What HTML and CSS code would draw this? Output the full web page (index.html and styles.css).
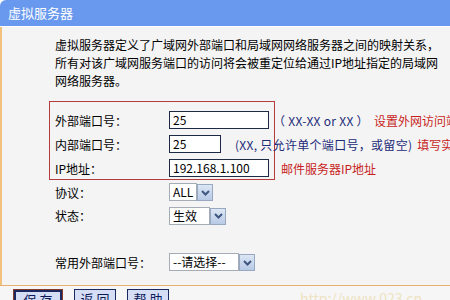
FILE: index.html
```html
<!DOCTYPE html>
<html lang="zh-CN">
<head>
  <meta charset="UTF-8" />
  <title>虚拟服务器</title>
  <link rel="stylesheet" href="styles.css">
</head>
<body>
  <div class="title">虚拟服务器</div>

  <div class="panel">
    <p class="intro">虚拟服务器定义了广域网外部端口和局域网网络服务器之间的映射关系，<br>所有对该广域网服务端口的访问将会被重定位给通过IP地址指定的局域网<br>网络服务器。</p>

    <div class="box">
      <div class="row">
        <span class="label">外部端口号：</span>
        <span class="input wide">25</span>
        <span class="hint first">（ XX-XX or XX ）</span><span class="note">设置外网访问端口</span>
      </div>
      <div class="row">
        <span class="label">内部端口号：</span>
        <span class="input short">25</span>
        <span class="hint second">(XX, 只允许单个端口号，或留空)</span><span class="note">填写实际端口</span>
      </div>
      <div class="row">
        <span class="label">IP地址：</span>
        <span class="input wide">192.168.1.100</span>
        <span class="note first">邮件服务器IP地址</span>
      </div>
    </div>

    <div class="row proto">
      <span class="label">协议：</span>
      <span class="select">
        <span class="val all">ALL</span>
        <span class="arrow"><svg width="9" height="6" viewBox="0 0 9 6"><path d="M1 1 L4.5 4.5 L8 1" fill="none" stroke="#3e5680" stroke-width="2"/></svg></span>
      </span>
    </div>
    <div class="row state">
      <span class="label">状态：</span>
      <span class="select">
        <span class="val on">生效</span>
        <span class="arrow"><svg width="9" height="6" viewBox="0 0 9 6"><path d="M1 1 L4.5 4.5 L8 1" fill="none" stroke="#3e5680" stroke-width="2"/></svg></span>
      </span>
    </div>
    <div class="row common">
      <span class="label">常用外部端口号：</span>
      <span class="select">
        <span class="val pick">--请选择--</span>
        <span class="arrow"><svg width="9" height="6" viewBox="0 0 9 6"><path d="M1 1 L4.5 4.5 L8 1" fill="none" stroke="#3e5680" stroke-width="2"/></svg></span>
      </span>
    </div>
  </div>

  <div class="footer">
    <span class="focus"><button class="btn">保 存</button></span>
    <button class="btn">返 回</button>
    <button class="btn">帮 助</button>
    <span class="mark">http://www.023.cn</span>
  </div>
</body>
</html>
```

FILE: styles.css
```css
body {
  margin: 0;
  font-family: "Noto Sans CJK SC", "DejaVu Sans", sans-serif;
  font-size: 12px;
  color: #000;
  background-color: #fff;
  width: 450px;
  height: 300px;
  overflow: hidden;
}
.title {
  height: 26px;
  line-height: 26px;
  padding-left: 8px;
  background-color: #6899ee;
  color: #fff;
  font-size: 13px;
  border-top-left-radius: 6px;
  border-bottom: 1px solid #fff;
}
.panel {
  background-color: #f4f4f4;
  border-left: 2px solid #f2c27c;
  padding: 9px 0 13px 53px;
  height: 236px;
}
.intro {
  margin: 0;
  line-height: 18px;
  white-space: nowrap;
}
.box {
  margin: 11px 0 0 -6px;
  width: 219px;
  padding: 9px 0 2px 5px;
  border: 1px solid #b43c3c;
}
.row {
  display: flex;
  align-items: center;
  height: 18px;
  white-space: nowrap;
}
.box .row + .row {
  margin-top: 6px;
}
.label {
  width: 114px;
  flex: none;
}
.input {
  box-sizing: border-box;
  height: 18px;
  line-height: 16px;
  padding-left: 3px;
  background-color: #fff;
  border: 1px solid #1d2a44;
  flex: none;
}
.input.wide {
  width: 100px;
}
.input.short {
  width: 52px;
}
.hint {
  color: #1c2a78;
  letter-spacing: 0.3px;
}
.hint.first {
  margin-left: 4px;
}
.hint.second {
  margin-left: 14px;
}
.note {
  color: #c81e1e;
  margin-left: 5px;
}
.note.first {
  margin-left: 12px;
}
.select {
  display: flex;
  height: 18px;
  box-sizing: border-box;
}
.val {
  box-sizing: border-box;
  height: 18px;
  line-height: 16px;
  padding-left: 3px;
  background-color: #fff;
  border: 1px solid #a5acb5;
}
.val.all {
  width: 28px;
}
.val.on {
  width: 41px;
}
.val.pick {
  width: 70px;
}
.arrow {
  box-sizing: border-box;
  width: 16px;
  height: 17px;
  margin-top: 1px;
  display: flex;
  align-items: center;
  justify-content: center;
  background: linear-gradient(#dce6f4, #b8cae6);
  border: 1px solid #98a8c0;
}
.proto {
  margin-top: 3px;
}
.state {
  margin-top: 5px;
  height: 19px;
}
.common {
  margin-top: 28px;
}
.footer {
  border-top: 1px solid #e8b070;
  background-color: #f6f6f6;
  padding: 3px 0 0 13px;
  height: 20px;
  display: flex;
  align-items: flex-start;
  gap: 11px;
  white-space: nowrap;
}
.focus {
  display: flex;
  border: 1px solid #8a3a2a;
}
.btn {
  font-family: "Noto Sans CJK SC", sans-serif;
  font-size: 13px;
  line-height: 15px;
  height: 18px;
  width: 42px;
  padding: 0;
  color: #0c1a5a;
  background-color: #d6def6;
  border: 1px solid #1c2860;
  border-radius: 0;
}
.focus .btn {
  width: 48px;
  border-width: 2px;
}
.mark {
  margin-left: 120px;
  color: #eee3c2;
  font-size: 14px;
  line-height: 18px;
}
```
